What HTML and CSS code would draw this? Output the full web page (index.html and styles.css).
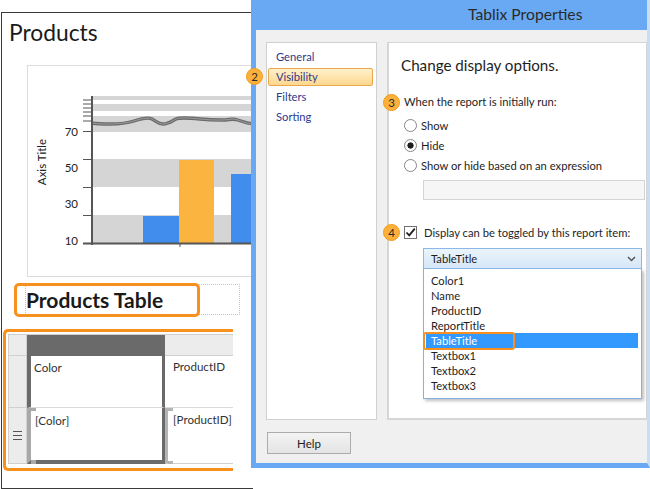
FILE: index.html
```html
<!DOCTYPE html>
<html>
<head>
<meta charset="utf-8">
<link rel="stylesheet" href="styles.css">
</head>
<body>
<div class="designer">
  <div class="rpt-title">Products</div>
  <div class="chart">
    <svg class="chart-svg" width="298" height="210" viewBox="28 66 298 210">
      <g fill="#d5d5d5">
        <rect x="92" y="96" width="240" height="4"/>
        <rect x="92" y="104" width="240" height="7"/>
        <rect x="92" y="116" width="240" height="16"/>
        <rect x="92" y="159" width="240" height="28"/>
        <rect x="92" y="215" width="240" height="28"/>
      </g>
      <rect x="143" y="216" width="36" height="27" fill="#418ded"/>
      <rect x="179" y="160" width="35" height="83" fill="#fbb440"/>
      <rect x="231" y="174" width="90" height="69" fill="#418ded"/>
      <path d="M92 123 C98 124 104 124 110 124 S128 123 134 121 S148 117 152 119 S158 124 163 124 S172 121 176 119 S190 118 200 119 S214 120 222 120 S232 118 238 120 S248 124 256 124 L330 124" fill="none" stroke="#6b6b6b" stroke-width="3.4" stroke-linejoin="round"/>
      <path d="M92 123 C98 124 104 124 110 124 S128 123 134 121 S148 117 152 119 S158 124 163 124 S172 121 176 119 S190 118 200 119 S214 120 222 120 S232 118 238 120 S248 124 256 124 L330 124" fill="none" stroke="#9c9c9c" stroke-width="1"/>
      <g stroke="#555" stroke-width="1">
        <line x1="83" y1="100" x2="92" y2="100"/>
        <line x1="83" y1="104" x2="92" y2="104"/>
        <line x1="83" y1="108" x2="92" y2="108"/>
        <line x1="83" y1="112" x2="92" y2="112"/>
        <line x1="83" y1="116" x2="92" y2="116"/>
        <line x1="83" y1="121" x2="92" y2="121"/>
        <line x1="83" y1="131.5" x2="92" y2="131.5"/>
        <line x1="83" y1="159.5" x2="92" y2="159.5"/>
        <line x1="83" y1="187.5" x2="92" y2="187.5"/>
        <line x1="83" y1="215.5" x2="92" y2="215.5"/>
        <line x1="180" y1="243" x2="180" y2="247"/>
      </g>
      <line x1="92" y1="96" x2="92" y2="245" stroke="#555" stroke-width="2"/>
      <line x1="83" y1="243.5" x2="330" y2="243.5" stroke="#555" stroke-width="2"/>
      <g class="ax-lbl" text-anchor="end">
        <text x="78" y="136">70</text>
        <text x="78" y="172">50</text>
        <text x="78" y="208">30</text>
        <text x="78" y="245">10</text>
      </g>
      <text class="ax-lbl" transform="translate(45.5 162) rotate(-90)" text-anchor="middle">Axis Title</text>
    </svg>
  </div>
  <div class="tb-row">
    <span class="tb-text">Products Table</span>
    <span class="tb-hl"></span>
  </div>
  <div class="tbl-wrap">
    <div class="tbl">
      <div class="c h0"></div>
      <div class="c h1"></div>
      <div class="c h2"></div>
      <div class="c r1c0"></div>
      <div class="c r1c1">Color</div>
      <div class="c r1c2">ProductID</div>
      <div class="c r2c0">
        <svg width="9" height="9" viewBox="0 0 9 9"><g stroke="#555" stroke-width="1"><line x1="0" y1="0.5" x2="9" y2="0.5"/><line x1="0" y1="4.5" x2="9" y2="4.5"/><line x1="0" y1="8.5" x2="9" y2="8.5"/></g></svg>
      </div>
      <div class="c r2c1">[Color]</div>
      <div class="c r2c2">[ProductID]</div>
    </div>
  </div>
</div>

<div class="dialog">
  <div class="titlebar">Tablix Properties</div>
  <div class="dlg-body">
    <div class="panels">
      <div class="nav">
        <div class="nav-item">General</div>
        <div class="nav-item sel">Visibility</div>
        <div class="nav-item">Filters</div>
        <div class="nav-item">Sorting</div>
      </div>
      <div class="content">
        <div class="heading">Change display options.</div>
        <div class="label">When the report is initially run:</div>
        <div class="radio-row"><span class="radio"></span>Show</div>
        <div class="radio-row"><span class="radio on"></span>Hide</div>
        <div class="radio-row"><span class="radio"></span>Show or hide based on an expression</div>
        <div class="expr"></div>
        <div class="check-row"><span class="checkbox"><svg width="11" height="11" viewBox="0 0 11 11"><path d="M1.5 5.5 L4.2 8.3 L9.8 1.6" fill="none" stroke="#1e1e1e" stroke-width="1.8"/></svg></span>Display can be toggled by this report item:</div>
        <div class="combo"><span>TableTitle</span><svg width="9" height="6" viewBox="0 0 9 6"><path d="M1 1 L4.5 4.5 L8 1" fill="none" stroke="#555" stroke-width="1.5"/></svg></div>
        <div class="list">
          <div class="li">Color1</div>
          <div class="li">Name</div>
          <div class="li">ProductID</div>
          <div class="li">ReportTitle</div>
          <div class="li hl">TableTitle</div>
          <div class="li">Textbox1</div>
          <div class="li">Textbox2</div>
          <div class="li">Textbox3</div>
          <span class="li-mark"></span>
        </div>
      </div>
    </div>
    <button class="help">Help</button>
  </div>
</div>

<span class="badge b2">2</span>
<span class="badge b3">3</span>
<span class="badge b4">4</span>
</body>
</html>
```

FILE: styles.css
```css
* { box-sizing: border-box; }
html, body { margin: 0; padding: 0; }
body {
  width: 650px;
  height: 489px;
  overflow: hidden;
  position: relative;
  background: #fff;
  font-family: Lato, "Noto Sans", sans-serif;
  color: #222;
}

/* ---------- report designer ---------- */
.designer {
  margin: 12px 0 0 1px;
  width: 252px;
  height: 477px;
  border: 1px solid #3a3a3a;
  border-right: none;
  overflow: hidden;
}
.rpt-title {
  height: 34px;
  padding: 4px 0 0 7px;
  font-size: 22.8px;
  line-height: 30px;
  color: #1a1a1a;
}
.chart {
  margin: 18px 0 0 25px;
  width: 300px;
  height: 212px;
  border: 1px solid #dcdcdc;
}
.chart-svg { display: block; }
.ax-lbl { font-family: Lato, sans-serif; font-size: 11.5px; fill: #222; }

.tb-row {
  position: relative;
  margin: 7px 0 0 23px;
  width: 215px;
  height: 31px;
  border: 1px dotted #c4c4c4;
}
.tb-text {
  display: block;
  font-size: 21px;
  font-weight: bold;
  line-height: 29px;
  color: #1a1a1a;
}
.tb-hl {
  position: absolute;
  left: -12px;
  top: -2px;
  width: 186px;
  height: 34px;
  border: 3px solid #f7901e;
  border-radius: 5px;
}

.tbl-wrap {
  margin: 14px 0 0 1px;
  width: 230px;
  border: 3px solid #f7901e;
  border-right: none;
  border-radius: 5px 0 0 5px;
  padding: 2px 0 4px 2px;
}
.tbl {
  display: grid;
  grid-template-columns: 19px 138px 1fr;
  grid-template-rows: 21px 52px 56px;
  border-top: 1px solid #cfcfcf;
}
.c { font-size: 11.6px; line-height: 16px; color: #333; }
.h0 { background: #ececec; border-right: 1px solid #d0d0d0; border-bottom: 1px solid #d0d0d0; border-left: 1px solid #d0d0d0; }
.h1 { background: #6a6a6a; }
.h2 { background: #ececec; border-bottom: 1px solid #d0d0d0; }
.r1c0 { background: #ececec; border-right: 1px solid #d0d0d0; border-bottom: 1px solid #d0d0d0; border-left: 1px solid #d0d0d0; }
.r1c1 {
  border-left: 4px solid #6a6a6a;
  border-right: 3px solid #6a6a6a;
  border-bottom: 1px solid #dadada;
  padding: 4px 0 0 3px;
}
.r1c2 { border-bottom: 1px solid #dadada; padding: 3px 0 0 8px; }
.r2c0 {
  background: #ececec;
  border-right: 1px solid #d0d0d0;
  border-left: 1px solid #d0d0d0;
  border-bottom: 1px solid #d0d0d0;
  display: flex;
  align-items: center;
  padding-left: 4px;
}
.r2c0 svg { display: block; }
.r2c1 {
  position: relative;
  border-left: 4px solid #a9a9a9;
  border-right: 3px solid #6a6a6a;
  border-bottom: 4px solid #6a6a6a;
  padding: 5px 0 0 4px;
}
.r2c1::before,
.r2c1::after {
  content: "";
  position: absolute;
  left: 0;
  width: 5px;
  height: 3px;
  background: #a9a9a9;
}
.r2c1::before { top: 0; }
.r2c1::after { bottom: -4px; height: 4px; }
.r2c2 {
  position: relative;
  border-left: 3px solid #b4b4b4;
  border-bottom: 1px solid #d0d0d0;
  padding: 4px 0 0 5px;
}
.r2c2::before,
.r2c2::after {
  content: "";
  position: absolute;
  left: 0;
  width: 5px;
  height: 3px;
  background: #b4b4b4;
}
.r2c2::before { top: 0; }
.r2c2::after { bottom: -1px; }

/* ---------- dialog ---------- */
.dialog {
  position: absolute;
  left: 251px;
  top: 0;
  width: 399px;
  height: 468px;
  border-left: 5px solid #69a9f4;
  border-bottom: 5px solid #69a9f4;
  border-right: 3px solid #c9ddf5;
  background: #f0f0f0;
  display: flex;
  flex-direction: column;
  font-size: 11.2px;
}
.titlebar {
  height: 30px;
  background: #69a9f4;
  padding-left: 212px;
  font-size: 15.7px;
  line-height: 29px;
  color: #2a2a2a;
}
.dlg-body { flex: 1; padding: 12px 0 0 10px; }
.panels { display: flex; gap: 10px; height: 378px; }
.nav {
  flex: none;
  width: 111px;
  background: #fff;
  border: 1px solid #d0d0d0;
  padding-top: 4px;
}
.nav-item {
  line-height: 20px;
  padding-left: 9px;
  color: #2c3a8e;
}
.nav-item.sel {
  margin: 1px 3px 1px 1px;
  padding-left: 7px;
  line-height: 16px;
  border: 1px solid #eba64c;
  border-radius: 2px;
  background: linear-gradient(#fff1cb, #fdd78e);
}
.content {
  flex: 1;
  min-width: 0;
  background: #fff;
  border: 1px solid #d6d6d6;
  border-left-width: 2px;
  border-bottom-width: 2px;
  padding-left: 15px;
}
.heading {
  margin: 11px 0 0 -3px;
  font-size: 15.2px;
  line-height: 22px;
  color: #1e1e1e;
}
.label { margin-top: 16px; line-height: 20px; color: #1e1e1e; }
.radio-row { display: flex; align-items: center; height: 20px; color: #1e1e1e; }
.label + .radio-row { margin-top: 3px; }
.radio {
  flex: none;
  width: 13px;
  height: 13px;
  margin-right: 4px;
  border: 1px solid #878787;
  border-radius: 50%;
  background: #fff;
}
.radio.on { background: radial-gradient(circle, #1e1e1e 0 2.8px, #fff 3.4px); }
.expr {
  margin: 5px 0 0 19px;
  width: 222px;
  height: 20px;
  border: 1px solid #d4d4d4;
  background: #f6f6f6;
}
.check-row { margin-top: 22px; display: flex; align-items: center; height: 20px; color: #1e1e1e; white-space: nowrap; }
.checkbox {
  flex: none;
  width: 13px;
  height: 13px;
  margin-right: 7px;
  border: 1px solid #707070;
  background: #fff;
  display: flex;
  align-items: center;
  justify-content: center;
}
.checkbox svg { display: block; }
.combo {
  margin: 6px 0 0 19px;
  width: 219px;
  height: 21px;
  border: 1px solid #8ab8e8;
  background: linear-gradient(#ebf4fc, #d6e7f8);
  padding: 0 5px 0 7px;
  display: flex;
  justify-content: space-between;
  align-items: center;
  line-height: 19px;
  color: #1e1e1e;
}
.combo svg { display: block; }
.list {
  position: relative;
  margin-left: 19px;
  width: 219px;
  height: 130px;
  border: 1px solid #86b2e2;
  border-top: none;
  background: #fff;
  box-shadow: 2px 2px 3px rgba(0, 0, 0, 0.25);
  padding-top: 4px;
}
.li { line-height: 15px; height: 15px; padding-left: 7px; color: #1e1e1e; }
.li.hl { margin: 0 3px 0 2px; padding-left: 5px; background: #3399ff; color: #fff; }
.li-mark {
  position: absolute;
  left: -1px;
  top: 63px;
  width: 92px;
  height: 18px;
  border: 2px solid #f7901e;
  border-radius: 3px;
}
.help {
  display: block;
  margin: 12px 0 0 1px;
  width: 84px;
  height: 22px;
  border: 1px solid #acacac;
  background: linear-gradient(#f3f3f3, #e4e4e4);
  font-family: inherit;
  font-size: 11.5px;
  color: #1e1e1e;
  padding: 0;
}

/* ---------- callout badges ---------- */
.badge {
  position: absolute;
  width: 17px;
  height: 17px;
  border-radius: 50%;
  background: #fcb03c;
  border: 1px solid #f29b16;
  font-size: 11.5px;
  line-height: 15px;
  text-align: center;
  color: #2a2a2a;
}
.b2 { left: 246px; top: 68px; }
.b3 { left: 383px; top: 94px; }
.b4 { left: 383px; top: 224px; }
```
